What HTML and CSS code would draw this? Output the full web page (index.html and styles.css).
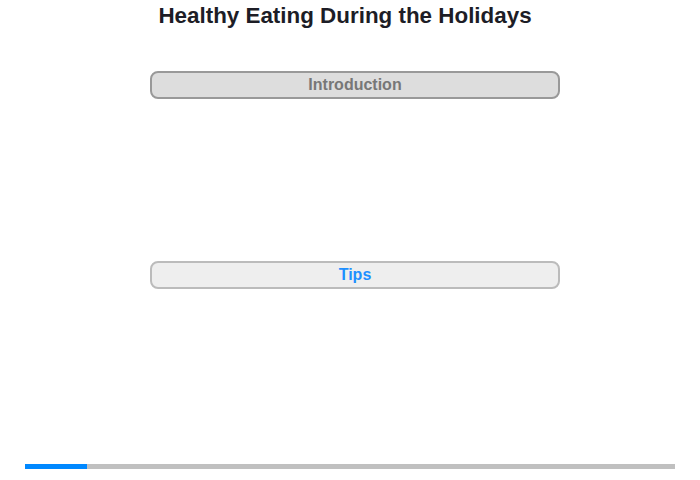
FILE: index.html
```html
<!DOCTYPE html>
<html>
  <head>
    <title>Healthy Eating During the Holidays</title>
    <link rel="stylesheet" href="styles.css">
  </head>
  <body>

    <h1 class="page-title">Healthy Eating During the Holidays</h1>

    <main class="sections">
      <section class="section">
        <button class="section-toggle section-toggle-active">Introduction</button>
      </section>
      <section class="section">
        <button class="section-toggle">Tips</button>
      </section>
    </main>

    <footer class="progress">
      <div class="progress-fill" style="width: 62px"></div>
    </footer>

  </body>
</html>
```

FILE: styles.css
```css
*,
*:before,
*:after {
  box-sizing: border-box;
}

html,
body {
  height: 100%;
}

body {
  display: flex;
  flex-flow: column;
  background: #fff;
  margin: 0px;
  color: #222;
  font-family: 'Liberation Sans', Arial, sans-serif;
}

.page-title {
  margin: 0px;
  padding: 3px 10px 0px 0px;
  font-size: 22.4px;
  line-height: 26px;
  text-align: center;
  color: #1d1d26;
}

.sections {
  flex: 1;
  padding: 42px 0px 0px 150px;
}

.section {
  width: 410px;
  height: 190px;
}

.section-toggle {
  display: block;
  width: 100%;
  height: 28px;
  padding: 0px;
  background: #eee;
  border: 2px solid #bbb;
  border-radius: 8px;
  font-family: inherit;
  font-size: 16px;
  font-weight: bold;
  color: #1e90ff;
  cursor: pointer;
}

.section-toggle-active {
  background: #ddd;
  border-color: #999;
  color: #777;
}

.progress {
  height: 5px;
  margin: 0px 25px 11px 25px;
  background: #c0c0c0;
}

.progress-fill {
  height: 100%;
  background: #0088ff;
}
```
